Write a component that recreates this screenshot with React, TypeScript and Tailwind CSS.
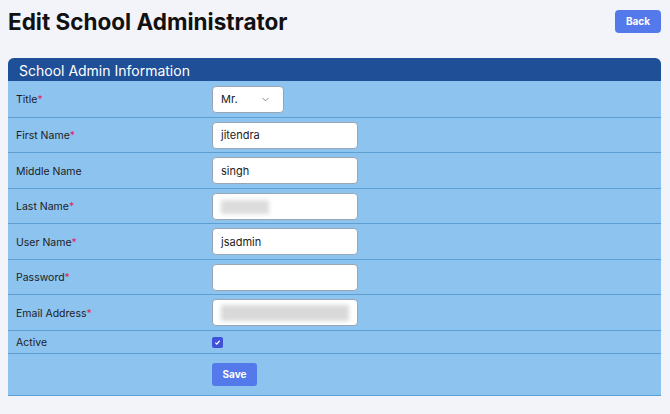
import { ChevronDown } from "lucide-react";

const font = { fontFamily: "Inter, 'Noto Sans', sans-serif" };

function Label({ text, req }: { text: string; req?: boolean }) {
  return (
    <div className="w-[204px] pl-[8px] pt-[2px] text-[10.5px] text-[#1d1d1d]">
      {text}
      {req && <span className="text-[#e0245e]">*</span>}
    </div>
  );
}

function Row({ children, h }: { children: React.ReactNode; h: string }) {
  return <div className={`flex items-center border-b border-[#5e9fd3] ${h}`}>{children}</div>;
}

function TextBox({ value, blur }: { value?: string; blur?: "short" | "long" }) {
  return (
    <div className="flex h-[27px] w-[146px] items-center rounded-[4px] border border-[#9aa5b4] bg-white px-[8px] pt-[1px] text-[11px] text-[#222]">
      {value}
      {blur === "short" && <div className="h-[14px] w-[48px] bg-[#dcdcdc] blur-[2px]" />}
      {blur === "long" && <div className="h-[16px] w-[130px] bg-[#d9d9d9] blur-[2px]" />}
    </div>
  );
}

export default function App() {
  return (
    <div className="min-h-[414px] w-[670px] bg-[#f3f4f9]" style={font}>
      <div className="flex items-start justify-between px-[8px] pt-[8px]">
        <h1 className="text-[22.5px] font-bold leading-[28px] text-[#111]">Edit School Administrator</h1>
        <button className="mt-[2px] mr-[1px] h-[23px] w-[46px] rounded-[4px] bg-[#5479ea] text-[10px] font-bold text-white">
          Back
        </button>
      </div>

      <div className="mx-[8px] mt-[22px] w-[653px] overflow-hidden rounded-t-[6px] border-b border-[#5e9fd3] bg-[#8cc3ef]">
        <div className="h-[23px] bg-[#1f4f97] pl-[11px] text-[14px] leading-[25px] text-white">
          School Admin Information
        </div>

        <Row h="h-[37px]">
          <Label text="Title" req />
          <div className="flex h-[27px] w-[72px] items-center justify-between rounded-[4px] border border-[#9aa5b4] bg-white pl-[8px] pr-[12px] text-[11px] text-[#222]">
            Mr.
            <ChevronDown size={11} strokeWidth={1.5} className="text-[#555]" />
          </div>
        </Row>
        <Row h="h-[35px]">
          <Label text="First Name" req />
          <TextBox value="jitendra" />
        </Row>
        <Row h="h-[36px]">
          <Label text="Middle Name" />
          <TextBox value="singh" />
        </Row>
        <Row h="h-[35px]">
          <Label text="Last Name" req />
          <TextBox blur="short" />
        </Row>
        <Row h="h-[36px]">
          <Label text="User Name" req />
          <TextBox value="jsadmin" />
        </Row>
        <Row h="h-[35px]">
          <Label text="Password" req />
          <TextBox />
        </Row>
        <Row h="h-[36px]">
          <Label text="Email Address" req />
          <TextBox blur="long" />
        </Row>
        <Row h="h-[23px]">
          <Label text="Active" />
          <div className="flex h-[11px] w-[11px] items-center justify-center rounded-[2px] bg-[#3f51d8]">
            <svg width="7" height="7" viewBox="0 0 8 8">
              <path d="M1.5 4.2 L3.2 5.8 L6.5 2" stroke="white" strokeWidth="1.4" fill="none" />
            </svg>
          </div>
        </Row>
        <div className="flex h-[41px] items-center">
          <div className="w-[204px]" />
          <button className="h-[23px] w-[45px] rounded-[3px] bg-[#5479ea] text-[10px] font-bold text-white">
            Save
          </button>
        </div>
      </div>
    </div>
  );
}
